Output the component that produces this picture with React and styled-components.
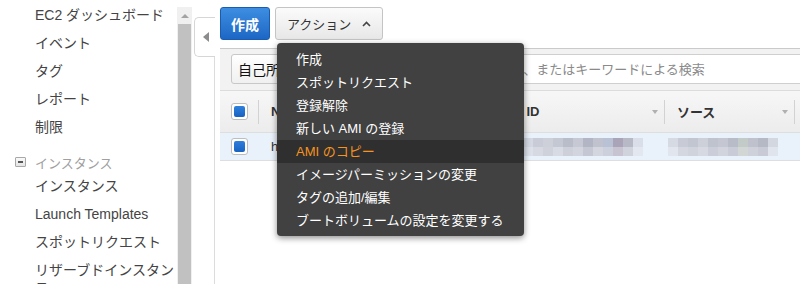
import styled, { createGlobalStyle } from "styled-components";

const GlobalStyle = createGlobalStyle`
  html, body {
    margin: 0;
    padding: 0;
    background: #fff;
  }
  body {
    font-family: "Liberation Sans", "Noto Sans CJK JP", sans-serif;
    color: #333;
  }
`;

const Page = styled.div`
  display: flex;
  width: 800px;
  height: 284px;
  overflow: hidden;
`;

const Sidebar = styled.nav`
  width: 177px;
  flex-shrink: 0;
  padding-top: 1px;
  box-sizing: border-box;
  overflow: hidden;
`;

const NavItem = styled.div`
  padding: 5px 0 5px 35px;
  font-size: 14px;
  line-height: 18px;
  color: #444;
`;

const SectionHead = styled.div`
  display: flex;
  align-items: center;
  gap: 9px;
  margin-top: 11px;
  padding-left: 15px;
  height: 20px;
  font-size: 13px;
  color: #a0a0a0;
`;

const Toggle = styled.span`
  width: 9px;
  height: 8px;
  border: 1px solid #a8a8a8;
  border-radius: 1px;
  background: linear-gradient(#fafafa, #e4e4e4);
  display: flex;
  align-items: center;
  justify-content: center;

  &::before {
    content: "";
    width: 5px;
    height: 2px;
    background: #555;
  }
`;

const Scrollbar = styled.div`
  width: 15px;
  flex-shrink: 0;
  margin-top: 7px;
  background: #f0f0f0;
  display: flex;
  flex-direction: column;
`;

const ScrollUp = styled.div`
  height: 17px;
  display: flex;
  align-items: center;
  justify-content: center;

  &::before {
    content: "";
    border-left: 4px solid transparent;
    border-right: 4px solid transparent;
    border-bottom: 4px solid #a3a3a3;
  }
`;

const ScrollThumb = styled.div`
  flex: 1;
  margin: 0 1px;
  background: #c1c1c1;
`;

const Gutter = styled.div`
  width: 23px;
  flex-shrink: 0;
  display: flex;
  flex-direction: column;
`;

const CollapseTab = styled.div`
  margin: 17px 0 0 2px;
  height: 38px;
  border: 1px solid #d6d6d6;
  border-right: none;
  border-radius: 5px 0 0 5px;
  background: #fff;
  display: flex;
  align-items: center;
  padding-left: 8px;

  &::before {
    content: "";
    border-top: 5px solid transparent;
    border-bottom: 5px solid transparent;
    border-right: 6px solid #8c8c8c;
  }
`;

const GutterLine = styled.div`
  flex: 1;
  border-right: 1px solid #dcdcdc;
`;

const Main = styled.main`
  flex: 1;
  min-width: 0;
  padding-left: 5px;
`;

const Toolbar = styled.div`
  height: 48px;
  box-sizing: border-box;
  padding-top: 7px;
  display: flex;
  align-items: flex-start;
  gap: 5px;
`;

const PrimaryButton = styled.button`
  width: 50px;
  height: 33px;
  border: 1px solid #1a5cb0;
  border-radius: 3px;
  background: linear-gradient(#3d8ee2, #1d67c4);
  color: #fff;
  font-family: "Liberation Sans", "Noto Sans CJK JP", sans-serif;
  font-size: 14px;
  font-weight: 700;
  padding: 0;
`;

const MenuWrap = styled.div`
  position: relative;
`;

const Button = styled.button`
  width: 108px;
  height: 33px;
  border: 1px solid #c4c4c4;
  border-radius: 3px;
  background: linear-gradient(#fbfbfb, #e7e7e7);
  color: #333;
  font-family: "Liberation Sans", "Noto Sans CJK JP", sans-serif;
  font-size: 13px;
  display: flex;
  align-items: center;
  gap: 11px;
  padding: 0 0 0 11px;

  svg {
    flex-shrink: 0;
  }
`;

const Menu = styled.ul`
  position: absolute;
  top: calc(100% + 3px);
  left: 2px;
  z-index: 10;
  width: 247px;
  margin: 0;
  padding: 5px 0 4px;
  list-style: none;
  background: #414141;
  border-radius: 4px;
  box-shadow: 0 2px 6px rgba(0, 0, 0, 0.45);
`;

const MenuItem = styled.li`
  height: 23px;
  line-height: 23px;
  padding-left: 19px;
  font-size: 13px;
  white-space: nowrap;
  color: ${(p) => (p.$active ? "#f7931e" : "#fff")};
  background: ${(p) => (p.$active ? "#2f2f2f" : "transparent")};
`;

const Panel = styled.section`
  width: 640px;
  border-top: 1px solid #cacaca;
`;

const FilterBar = styled.div`
  height: 41px;
  box-sizing: border-box;
  padding: 5px 0 0 11px;
  background: #f2f2f2;
  display: flex;
  align-items: flex-start;
  gap: 8px;
`;

const FilterButton = styled.button`
  width: 80px;
  height: 30px;
  border: 1px solid #c8c8c8;
  border-radius: 3px;
  background: linear-gradient(#fff, #f0f0f0);
  color: #111;
  font-family: "Liberation Sans", "Noto Sans CJK JP", sans-serif;
  font-size: 14px;
  padding: 0 0 0 6px;
  text-align: left;
`;

const Search = styled.input`
  flex: 1;
  height: 30px;
  box-sizing: border-box;
  border: 1px solid #cfcfcf;
  background: #fff;
  padding: 0 0 0 35px;
  font-family: "Liberation Sans", "Noto Sans CJK JP", sans-serif;
  font-size: 13px;
  outline: none;

  &::placeholder {
    color: #8a8a8a;
  }
`;

const Row = styled.div`
  display: grid;
  grid-template-columns: 39px 228px 178px 130px 1fr;
  height: ${(p) => (p.$head ? "43px" : "28px")};
  box-sizing: border-box;
  border-top: ${(p) => (p.$head ? "1px solid #dcdcdc" : "none")};
  border-bottom: 1px solid #dedede;
  background: ${(p) =>
    p.$head ? "linear-gradient(#f7f7f7, #ececec)" : "#e9f1fb"};
`;

const Cell = styled.div`
  display: flex;
  align-items: center;
  min-width: 0;
  padding-left: ${(p) => p.$pad ?? 12}px;
  font-size: 13px;
  color: #333;
  white-space: nowrap;
  overflow: hidden;
`;

const HeadLabel = styled.span`
  flex: 1;
  font-weight: 700;
  color: #333;
`;

const SortArrow = styled.span`
  border-left: 3.5px solid transparent;
  border-right: 3.5px solid transparent;
  border-top: 4px solid #b0b0b0;
  margin-right: 6px;
`;

const Divider = styled.span`
  width: 1px;
  height: 24px;
  background: #d2d2d2;
  flex-shrink: 0;
`;

const CheckSpacer = styled.span`
  flex: 1;
`;

const Check = styled.span`
  width: 15px;
  height: 15px;
  flex-shrink: 0;
  border: 1px solid #bdbdbd;
  border-radius: 3px;
  background: #fff;
  display: flex;
  align-items: center;
  justify-content: center;

  &::before {
    content: "";
    width: 11px;
    height: 11px;
    border-radius: 2px;
    background: linear-gradient(#2f7fdc, #1862c0);
  }
`;

const Blur = styled.div`
  display: grid;
  grid-template-columns: repeat(${(p) => p.$cols}, 10px);
  grid-auto-rows: 9px;
  filter: blur(0.7px);
`;

const Pixel = styled.span`
  background: ${(p) => p.$c};
`;

const idPixels = [
  "#d3d8e2", "#c9ccd6", "#cdd0d9", "#c4c8d2", "#b9bdc9", "#c6c9d3", "#b2b6c4", "#c0c2cd", "#b9c2d4", "#aaa4b9", "#b7bac6", "#d9dee8",
  "#dbe0ea", "#d6d9e1", "#cfd2db", "#d8dbe3", "#cdd0d9", "#d2d5de", "#c5c8d2", "#d4d6df", "#cbd0dc", "#c7c3d0", "#d0d3dc", "#e2e7f0",
];

const srcPixels = [
  "#d6dae3", "#c8cbd5", "#c2c6d0", "#cdd0d9", "#bfc3ce", "#c4c7d1", "#b8bcc8", "#c3cbc9", "#bfc2cd", "#b5b9c6", "#d3d7e0",
  "#e0e5ee", "#d4d7df", "#d0d3dc", "#d6d9e1", "#cbced8", "#d1d4dd", "#c9ccd6", "#d2d7d6", "#ced1da", "#c8cbd5", "#dfe4ed",
];

const menuItems = [
  "作成",
  "スポットリクエスト",
  "登録解除",
  "新しい AMI の登録",
  "AMI のコピー",
  "イメージパーミッションの変更",
  "タグの追加/編集",
  "ブートボリュームの設定を変更する",
];

function ChevronUp() {
  return (
    <svg width="9" height="6" viewBox="0 0 9 6">
      <path d="M1 5 L4.5 1.5 L8 5" fill="none" stroke="#444" strokeWidth="1.6" />
    </svg>
  );
}

export default function App() {
  return (
    <>
      <GlobalStyle />
      <Page>
        <Sidebar>
          <NavItem>EC2 ダッシュボード</NavItem>
          <NavItem>イベント</NavItem>
          <NavItem>タグ</NavItem>
          <NavItem>レポート</NavItem>
          <NavItem>制限</NavItem>
          <SectionHead>
            <Toggle />
            インスタンス
          </SectionHead>
          <NavItem>インスタンス</NavItem>
          <NavItem>Launch Templates</NavItem>
          <NavItem>スポットリクエスト</NavItem>
          <NavItem>リザーブドインスタンス</NavItem>
        </Sidebar>
        <Scrollbar>
          <ScrollUp />
          <ScrollThumb />
        </Scrollbar>
        <Gutter>
          <CollapseTab />
          <GutterLine />
        </Gutter>
        <Main>
          <Toolbar>
            <PrimaryButton>作成</PrimaryButton>
            <MenuWrap>
              <Button>
                アクション
                <ChevronUp />
              </Button>
              <Menu>
                {menuItems.map((item) => (
                  <MenuItem key={item} $active={item === "AMI のコピー"}>
                    {item}
                  </MenuItem>
                ))}
              </Menu>
            </MenuWrap>
          </Toolbar>
          <Panel>
            <FilterBar>
              <FilterButton>自己所有</FilterButton>
              <Search placeholder="タグや属性によるフィルター、またはキーワードによる検索" />
            </FilterBar>
            <Row $head>
              <Cell $pad={11}>
                <Check />
                <CheckSpacer />
                <Divider />
              </Cell>
              <Cell>
                <HeadLabel>Name</HeadLabel>
                <SortArrow />
                <Divider />
              </Cell>
              <Cell>
                <HeadLabel>AMI ID</HeadLabel>
                <SortArrow />
                <Divider />
              </Cell>
              <Cell>
                <HeadLabel>ソース</HeadLabel>
                <SortArrow />
                <Divider />
              </Cell>
              <Cell />
            </Row>
            <Row>
              <Cell $pad={11}>
                <Check />
              </Cell>
              <Cell>hoge-image</Cell>
              <Cell $pad={36}>
                <Blur $cols={12}>
                  {idPixels.map((c, i) => (
                    <Pixel key={i} $c={c} />
                  ))}
                </Blur>
              </Cell>
              <Cell $pad={3}>
                <Blur $cols={11}>
                  {srcPixels.map((c, i) => (
                    <Pixel key={i} $c={c} />
                  ))}
                </Blur>
              </Cell>
              <Cell />
            </Row>
          </Panel>
        </Main>
      </Page>
    </>
  );
}
